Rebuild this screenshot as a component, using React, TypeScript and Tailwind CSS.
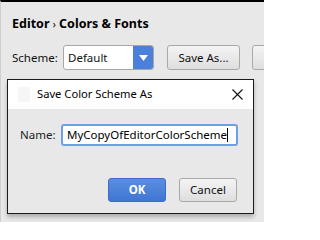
const font = { fontFamily: '"Noto Sans", "Liberation Sans", sans-serif' };

const ComboArrow = () => (
    <svg width="9" height="6" viewBox="0 0 9 6">
        <path d="M0 0 H9 L4.5 6 Z" fill="#fff" />
    </svg>
);

const CloseIcon = () => (
    <svg width="11" height="11" viewBox="0 0 11 11">
        <path d="M0.5 0.5 L10.5 10.5 M10.5 0.5 L0.5 10.5" stroke="#111" strokeWidth="1.1" />
    </svg>
);

export default function App() {
    return (
        <div
            className="relative w-[264px] h-[222px] overflow-hidden bg-[#e8e8e8] border-t-2 border-l border-t-black border-l-[#cfcfcf] text-[11.5px] text-[#111]"
            style={font}
        >
            <div className="pl-[11px] pt-[13px] h-[43px] font-bold text-[12.5px] text-black whitespace-nowrap">
                Editor <span className="text-[10px] font-normal">›</span> Colors &amp; Fonts
            </div>

            <div className="flex items-center pl-[11px] h-[25px] whitespace-nowrap">
                <span className="w-[51px] shrink-0">Scheme:</span>
                <div className="flex shrink-0 h-[25px] w-[91px] rounded-[3px] border border-[#a7a7a7] bg-white overflow-hidden">
                    <span className="flex-1 pl-[4px] leading-[23px]">Default</span>
                    <span className="w-[20px] bg-[#4a80d9] flex items-center justify-center">
                        <ComboArrow />
                    </span>
                </div>
                <button className="ml-[13px] shrink-0 h-[25px] w-[73px] rounded-[3px] border border-[#a9a9a9] bg-gradient-to-b from-[#f4f4f4] to-[#dedede]">
                    Save As...
                </button>
                <button className="ml-[12px] shrink-0 h-[25px] w-[40px] rounded-[3px] border border-[#a9a9a9] bg-gradient-to-b from-[#f4f4f4] to-[#dedede]" />
            </div>

            <div className="absolute left-[6px] top-[77px] w-[247px] h-[135px] border border-[#1b1b1b] bg-[#e8e8e8] shadow-[0_3px_4px_rgba(0,0,0,0.25)] flex flex-col whitespace-nowrap">
                <div className="h-[29px] bg-white flex items-center">
                    <span className="ml-[10px] w-[12px] h-[15px] bg-[#f6f6f6]" />
                    <span className="ml-[7px] flex-1 text-black text-[11.2px]">Save Color Scheme As</span>
                    <span className="mr-[10px] flex items-center">
                        <CloseIcon />
                    </span>
                </div>

                <div className="flex items-center mt-[15px] pl-[12px]">
                    <span className="w-[41px] text-[#222]">Name:</span>
                    <div className="h-[22px] w-[177px] rounded-[3px] border-2 border-[#6f9ee8] bg-white flex items-center pl-[4px] text-black">
                        MyCopyOfEditorColorScheme<span className="w-px h-[14px] bg-black" />
                    </div>
                </div>

                <div className="flex justify-end gap-[13px] mt-auto mb-[11px] pr-[16px]">
                    <button className="h-[24px] w-[58px] rounded-[3px] border border-[#3d6dc0] bg-gradient-to-b from-[#5b8ee0] to-[#3f76d4] text-white font-bold">
                        OK
                    </button>
                    <button className="h-[24px] w-[58px] rounded-[3px] border border-[#a9a9a9] bg-gradient-to-b from-[#f4f4f4] to-[#dedede]">
                        Cancel
                    </button>
                </div>
            </div>
        </div>
    );
}
